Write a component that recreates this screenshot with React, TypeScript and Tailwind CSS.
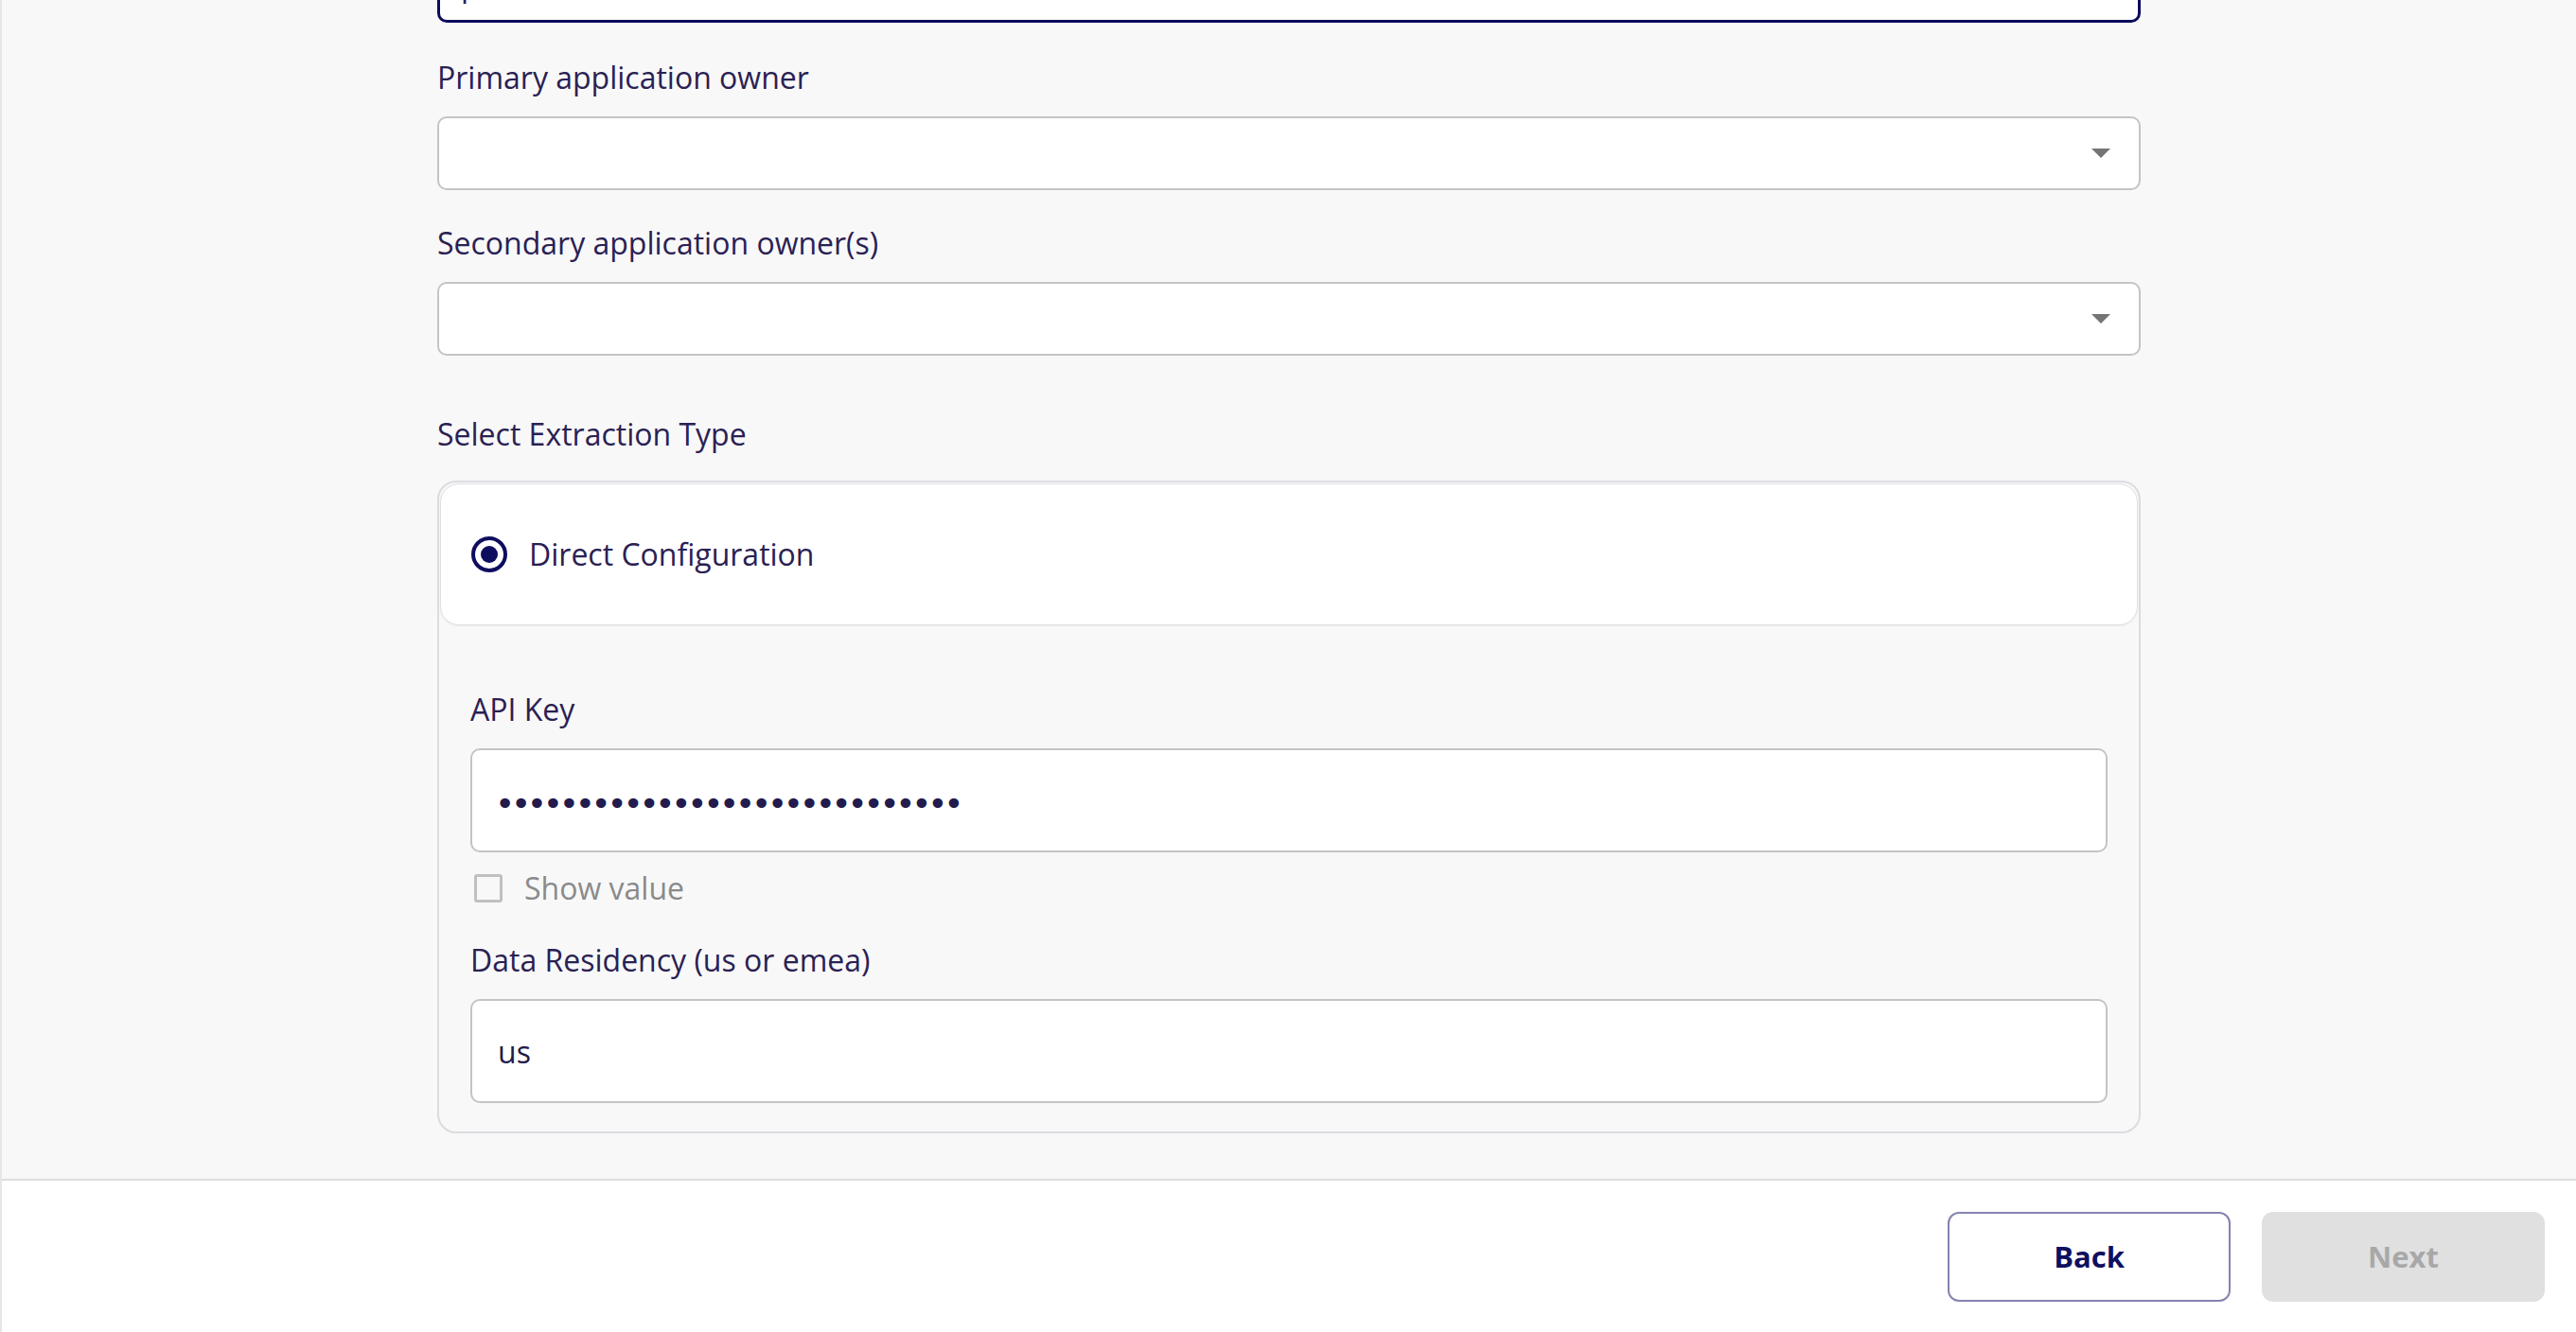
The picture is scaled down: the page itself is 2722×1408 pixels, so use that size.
import React from "react";

const labelCls = "text-[32px] leading-[48px] text-[#2a2153]";

function Caret() {
  return (
    <svg width="20" height="10" viewBox="0 0 20 10">
      <path d="M0 0h20L10 10z" fill="#757575" />
    </svg>
  );
}

function SelectField({ label, className }: { label: string; className?: string }) {
  return (
    <div className={className}>
      <div className={labelCls}>{label}</div>
      <div className="mt-[17px] h-[78px] bg-white border-2 border-[#c4c4c4] rounded-[10px] flex items-center justify-end pr-[30px]">
        <Caret />
      </div>
    </div>
  );
}

function TextField({ label, value, password, className }: { label: string; value: string; password?: boolean; className?: string }) {
  return (
    <div className={className}>
      <div className={labelCls}>{label}</div>
      <input
        readOnly
        type={password ? "password" : "text"}
        value={value}
        className={
          "mt-[17px] block w-full h-[110px] bg-white border-2 border-[#c4c4c4] rounded-[10px] text-[#231b4d] outline-none " +
          (password
            ? "pl-[24px] font-['DejaVu_Sans',sans-serif] text-[36px] tracking-[-4.3px] pt-[6px]"
            : "pl-[27px] font-['Open_Sans',sans-serif] text-[32px]")
        }
      />
    </div>
  );
}

export default function App() {
  return (
    <div className="h-[1408px] w-full flex flex-col border-l-2 border-[#e6e6e6] font-['Open_Sans',sans-serif] overflow-hidden">
      <div className="flex-1 bg-[#f8f8f8] pb-[48px]">
        <div className="w-[1800px] mx-auto flex flex-col">
          <div className="h-[24px] bg-white border-x-[3px] border-b-[3px] border-[#0c0b5c] rounded-b-[10px] overflow-hidden pl-[22px]">
            <div className="-mt-[40px] text-[32px] leading-[48px] text-[#2a2153] whitespace-nowrap">
              product, salesforce admins, finance team
            </div>
          </div>

          <SelectField label="Primary application owner" className="mt-[34px]" />
          <SelectField label="Secondary application owner(s)" className="mt-[32px]" />

          <div className={labelCls + " mt-[59px]"}>Select Extraction Type</div>

          <div className="mt-[25px] border-2 border-[#dcdce1] rounded-[20px] p-[1px]">
            <div className="h-[150px] bg-white border border-[#e0e0e4] rounded-[20px] shadow-[0_1px_2px_rgba(0,0,0,0.06)] flex items-center pl-[32px]">
              <div className="w-[38px] h-[38px] rounded-full border-[4px] border-[#0f0e5e] flex items-center justify-center">
                <div className="w-[18px] h-[18px] rounded-full bg-[#0f0e5e]" />
              </div>
              <span className="ml-[23px] text-[32px] leading-[48px] text-[#2a2153]">Direct Configuration</span>
            </div>

            <div className="px-[32px] pt-[65px] pb-[29px]">
              <TextField label="API Key" value={"a".repeat(29)} password />
              <div className="mt-[14px] h-[48px] flex items-center">
                <div className="ml-[4px] w-[30px] h-[30px] border-[3px] border-[#c0c0c0] rounded-[3px]" />
                <span className="ml-[23px] text-[32px] leading-[48px] text-[#8a8a8a]">Show value</span>
              </div>
              <TextField label="Data Residency (us or emea)" value="us" className="mt-[28px]" />
            </div>
          </div>
        </div>
      </div>

      <div className="h-[162px] shrink-0 bg-white border-t-2 border-[#dcdce1] flex items-center justify-end gap-[33px] pr-[33px]">
        <button className="w-[299px] h-[95px] border-2 border-[#8483b0] rounded-[12px] bg-white text-[31px] font-bold text-[#10105e]">
          Back
        </button>
        <button className="w-[299px] h-[95px] rounded-[12px] bg-[#e0e0e0] text-[31px] font-bold text-[#a8a8a8]">
          Next
        </button>
      </div>
    </div>
  );
}
